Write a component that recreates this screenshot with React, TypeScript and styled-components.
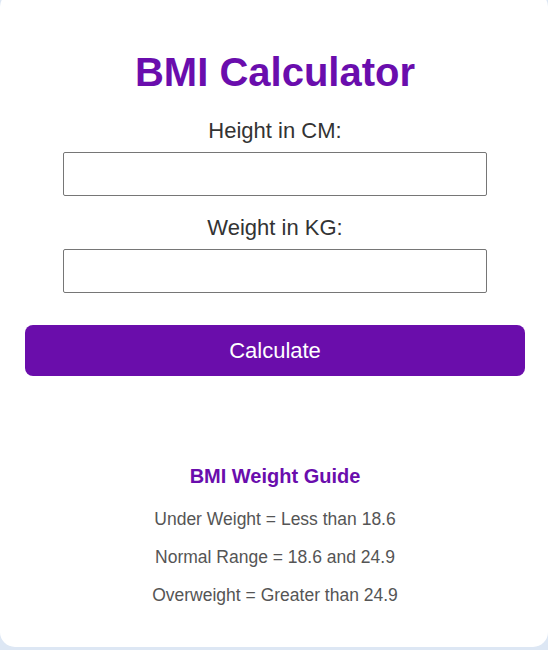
import React from "react";
import styled, { createGlobalStyle } from "styled-components";

const GlobalStyle = createGlobalStyle`
  html, body {
    margin: 0;
    padding: 0;
    background: #dde7f4;
    font-family: "Liberation Sans", Arial, sans-serif;
  }
  * { box-sizing: border-box; }
`;

const Page = styled.div`
  width: 548px;
  height: 650px;
  overflow: hidden;
`;

const Card = styled.main`
  margin-top: -8px;
  height: 655px;
  background: #ffffff;
  border-radius: 15px;
  padding: 57px 23px 0 25px;
  display: flex;
  flex-direction: column;
  align-items: center;
  text-align: center;
`;

const Title = styled.h1`
  margin: 0 0 23px;
  font-size: 40px;
  font-weight: 700;
  line-height: 46px;
  color: #6a0dad;
`;

const Field = styled.div`
  display: flex;
  flex-direction: column;
  align-items: center;
  gap: 8px;
  margin-bottom: 19px;
`;

const Label = styled.label`
  font-size: 22px;
  line-height: 26px;
  color: #333333;
`;

const Input = styled.input`
  width: 424px;
  height: 44px;
  border: 1px solid #767676;
  border-radius: 2px;
  background: #ffffff;
  font-size: 18px;
  padding: 0 10px;
`;

const Button = styled.button`
  width: 500px;
  height: 51px;
  margin-top: 13px;
  border: none;
  border-radius: 8px;
  background: #6a0dab;
  color: #ffffff;
  font-family: "Liberation Sans", Arial, sans-serif;
  font-size: 22px;
  cursor: pointer;
`;

const Guide = styled.section`
  margin-top: 88px;
  display: flex;
  flex-direction: column;
  align-items: center;
`;

const GuideTitle = styled.h3`
  margin: 0 0 12px;
  font-size: 20px;
  line-height: 24px;
  font-weight: 700;
  color: #6a0dad;
`;

const GuideLine = styled.p`
  margin: 0;
  font-size: 17.5px;
  line-height: 38px;
  color: #555555;
`;

export default function App() {
  return (
    <>
      <GlobalStyle />
      <Page>
        <Card>
          <Title>BMI Calculator</Title>
          <Field>
            <Label htmlFor="height">Height in CM:</Label>
            <Input id="height" type="number" />
          </Field>
          <Field>
            <Label htmlFor="weight">Weight in KG:</Label>
            <Input id="weight" type="number" />
          </Field>
          <Button type="button">Calculate</Button>
          <Guide>
            <GuideTitle>BMI Weight Guide</GuideTitle>
            <GuideLine>Under Weight = Less than 18.6</GuideLine>
            <GuideLine>Normal Range = 18.6 and 24.9</GuideLine>
            <GuideLine>Overweight = Greater than 24.9</GuideLine>
          </Guide>
        </Card>
      </Page>
    </>
  );
}
